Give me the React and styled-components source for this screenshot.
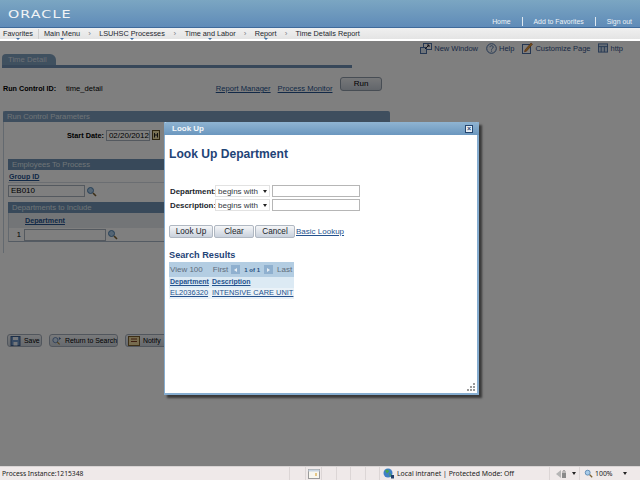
import React from "react"
import styled, { createGlobalStyle } from "styled-components"

const Global = createGlobalStyle`
	html, body { margin: 0; padding: 0; background: #fff; overflow: hidden; }
	* { box-sizing: border-box; }
`;

const Screen = styled.div`
	position: relative;
	width: 640px;
	height: 480px;
	display: flex;
	flex-direction: column;
	font-family: "Liberation Sans", Arial, sans-serif;
	font-size: 7.6px;
	color: #000;
	overflow: hidden;
`;

const Banner = styled.div`
	height: 28px;
	flex: none;
	display: flex;
	justify-content: space-between;
	background: linear-gradient(#7ba6c2, #5f8bb8);
	border-bottom: 1px solid #3f6a9a;
`;

const Logo = styled.div`
	margin: 8px 0 0 8px;
	font-family: "DejaVu Sans", sans-serif;
	font-size: 10.5px;
	line-height: 12px;
	letter-spacing: 0.8px;
	transform: scaleX(1.36);
	transform-origin: left;
	color: #f2f4f6;
	height: 12px;
`;

const BannerLinks = styled.div`
	display: flex;
	align-items: flex-end;
	padding: 0 8px 1px 0;
`;

const BannerLink = styled.span`
	color: #eef3f8;
	font-size: 6.9px;
	line-height: 9px;
	padding: 0 11px;
	border-left: ${p => (p.$first ? "none" : "1px solid #dfe8f0")};
	&:last-child { padding-right: 0; }
`;

const Nav = styled.div`
	height: 13px;
	flex: none;
	display: flex;
	align-items: center;
	padding-left: 3px;
	background: linear-gradient(#f0f0f0, #e4e4e4);
	border-bottom: 2px solid #fff;
	font-size: 7.3px;
	color: #23272e;
`;

const NavItem = styled.span`
	position: relative;
	white-space: nowrap;
	&::after {
		content: "";
		display: ${p => (p.$plain ? "none" : "block")};
		position: absolute;
		left: 50%;
		bottom: -2px;
		margin-left: -2px;
		border: 2px solid transparent;
		border-top: 2px solid #3b6ea8;
		border-bottom: none;
	}
`;

const NavSep = styled.span`
	width: ${p => p.$width}px;
	text-align: center;
	color: #7a7f86;
	font-size: 8px;
`;

const NavDivider = styled.span`
	width: 1px;
	height: 10px;
	margin: 0 5px 0 5px;
	background: #cfcfcf;
`;

const Page = styled.div`
	position: relative;
	flex: 1;
	background: #fff;
	min-height: 0;
	padding: 1px 0 0 3px;
`;

const Overlay = styled.div`
	position: absolute;
	inset: 0;
	background: rgba(0, 0, 0, 0.5);
`;

const ToolRow = styled.div`
	display: flex;
	justify-content: flex-end;
	align-items: center;
	gap: 8px;
	height: 12px;
	padding-right: 17px;
	font-size: 7.5px;
	color: #33528a;
`;

const ToolLink = styled.span`
	display: flex;
	align-items: center;
	gap: 2px;
`;

const TabStrip = styled.div`
	width: 350px;
	height: 14px;
	margin: 0 0 0 -1px;
	border-bottom: 3px solid #6f8fb3;
`;

const Tab = styled.div`
	width: 54px;
	height: 11px;
	padding: 0 0 0 6px;
	border-radius: 4px 6px 0 0;
	background: #7fa0bf;
	color: #d6dfe7;
	font-size: 7.7px;
	line-height: 11px;
`;

const RunRow = styled.div`
	display: flex;
	align-items: flex-end;
	width: 379px;
	height: 16px;
	margin-top: 9px;
`;

const BoldLabel = styled.b`
	width: 63px;
	font-size: 7.2px;
	flex: none;
`;

const Link = styled.span`
	color: #25528e;
	text-decoration: underline;
	white-space: nowrap;
	margin-left: ${p => p.$left || 0}px;
`;

const RunButton = styled.div`
	width: 42px;
	height: 14px;
	margin-left: auto;
	align-self: flex-start;
	border: 1px solid #8f9aa8;
	border-radius: 3px;
	background: linear-gradient(#eef0f3, #c5ccd6);
	text-align: center;
	line-height: 11px;
	font-size: 8px;
`;

const Panel = styled.div`
	width: 387px;
	margin-top: 18px;
	height: 142px;
	border-left: 1px solid #c6d2df;
`;

const PanelHead = styled.div`
	height: 11px;
	margin-left: -1px;
	padding-left: 4px;
	background: #7d9dbd;
	color: #dfe6ed;
	font-size: 7.7px;
	line-height: 11px;
	border-radius: 2px 2px 0 0;
`;

const DateRow = styled.div`
	display: flex;
	align-items: center;
	height: 12px;
	margin-top: 7px;
	padding-left: 63px;
	gap: 2px;
	b { font-size: 7.3px; }
`;

const Field = styled.div`
	width: ${p => p.$width}px;
	height: ${p => p.$height || 11}px;
	flex: none;
	padding-left: 2px;
	border: 1px solid #a9b3bf;
	background: #fff;
	font-size: 8px;
	line-height: 10px;
`;

const Section = styled.div`
	margin: ${p => p.$top}px 0 0 4px;
`;

const SectionHead = styled(PanelHead)`
	margin-left: 0;
	border-radius: 0;
	background: #7093b4;
`;

const LinkRow = styled.div`
	height: 13px;
	padding: 3px 0 0 1px;
	border-bottom: 1px solid #d7dde4;
	font-weight: bold;
	font-size: 7.1px;
	line-height: 9px;
`;

const InputRow = styled.div`
	display: flex;
	align-items: center;
	gap: 1px;
	margin-top: 2px;
`;

const GridHead = styled.div`
	height: 15px;
	padding: 3px 0 0 16px;
	background: #e7ebef;
	border-left: 1px solid #c6d2df;
	font-weight: bold;
	font-size: 7.2px;
	line-height: 9px;
`;

const GridRow = styled.div`
	height: 14px;
	display: flex;
	align-items: center;
	border-left: 1px solid #c6d2df;
	border-bottom: 1px solid #a9b7c6;
	gap: 1px;
`;

const RowNumber = styled.span`
	width: 14px;
	padding-right: 2px;
	text-align: right;
	flex: none;
`;

const SaveBar = styled.div`
	display: flex;
	gap: 7px;
	margin: 81px 0 0 4px;
`;

const SaveButton = styled.div`
	width: ${p => p.$width}px;
	height: 13px;
	flex: none;
	padding-left: 2px;
	display: flex;
	align-items: center;
	gap: 3px;
	border: 1px solid #a3adba;
	border-radius: 3px;
	background: linear-gradient(#f1f3f6, #ccd3dc);
	font-size: 6.9px;
	white-space: nowrap;
`;

const Dialog = styled.div`
	position: absolute;
	left: 164px;
	top: 81px;
	width: 315px;
	height: 273px;
	display: flex;
	flex-direction: column;
	background: #fff;
	border: 1px solid #86add0;
	border-width: 0 2px 2px 1px;
	box-shadow: 3px 3px 2px rgba(0, 0, 0, 0.55);
`;

const DialogBar = styled.div`
	height: 13px;
	flex: none;
	display: flex;
	justify-content: space-between;
	align-items: center;
	margin: 0 -2px 0 -1px;
	padding: 0 6px 0 8px;
	border-radius: 3px 3px 0 0;
	background: linear-gradient(#8fb4d2, #6b97bf);
	color: #f4f7fa;
	font-size: 8px;
	font-weight: bold;
`;

const CloseBox = styled.span`
	width: 8px;
	height: 8px;
	display: flex;
	align-items: center;
	justify-content: center;
	border: 1px solid #24456f;
	background: #e7eef5;
	color: #24456f;
	font-size: 7px;
	line-height: 6px;
	font-weight: bold;
`;

const DialogBody = styled.div`
	flex: 1;
	position: relative;
	padding: 12px 0 0 4px;
`;

const Title = styled.h1`
	margin: 0;
	height: 17px;
	font-size: 12.1px;
	line-height: 15px;
	font-weight: bold;
	color: #1f4477;
`;

const Criteria = styled.div`
	display: grid;
	grid-template-columns: 46px 57px 88px;
	grid-auto-rows: 14px;
	margin-top: 20px;
	align-items: center;
`;

const CritLabel = styled.b`
	font-size: 7.9px;
	margin-left: 1px;
	color: #22262c;
	white-space: nowrap;
`;

const Select = styled.div`
	width: 55px;
	height: 12px;
	padding-left: 2px;
	display: flex;
	justify-content: space-between;
	align-items: center;
	font-size: 8px;
	color: #33383e;
	border: 1px solid #e2e2e2;
	&::after {
		content: "";
		margin-right: 2px;
		border: 2.5px solid transparent;
		border-top: 3px solid #222;
		border-bottom: none;
	}
`;

const CritInput = styled.div`
	width: 88px;
	height: 12px;
	border: 1px solid #b6b6b6;
`;

const ActionRow = styled.div`
	display: flex;
	align-items: center;
	gap: 1px;
	margin-top: 13px;
`;

const ActionButton = styled.div`
	width: ${p => p.$width}px;
	height: 13px;
	border: 1px solid #b0b8c2;
	border-radius: 2px;
	background: linear-gradient(#f5f6f8, #c9d1dc);
	text-align: center;
	font-size: 8.2px;
	line-height: 11px;
	color: #22262c;
`;

const LookupLink = styled(Link)`
	font-size: 8px;
`;

const SearchTitle = styled.h2`
	margin: 11px 0 0;
	height: 13px;
	font-size: 9.2px;
	line-height: 12px;
	color: #1f4477;
`;

const Results = styled.div`
	width: 125px;
	font-size: 8px;
`;

const ResultsBar = styled.div`
	height: 15px;
	display: flex;
	align-items: center;
	padding-left: 1px;
	background: #b3cde2;
	color: #5f6c7a;
	white-space: nowrap;
`;

const FirstLabel = styled.span`
	margin-left: 10px;
`;

const PageArrow = styled.span`
	width: 9px;
	height: 9px;
	display: flex;
	align-items: center;
	justify-content: center;
	background: #8fb0cf;
	margin: ${p => p.$margin};
	&::after {
		content: "";
		border: 2px solid transparent;
		${p => (p.$back ? "border-right: 3px solid #e8eef4; border-left: none;" : "border-left: 3px solid #e8eef4; border-right: none;")}
	}
`;

const PageCount = styled.b`
	font-size: 6px;
	color: #284f80;
`;

const ResultRow = styled.div`
	display: grid;
	grid-template-columns: 42px 83px;
	height: 11px;
	padding-left: 1px;
	line-height: 10px;
	background: ${p => (p.$shade ? "#dceaf4" : "#eaf2f8")};
	font-weight: ${p => (p.$head ? "bold" : "normal")};
	font-size: ${p => (p.$head ? 7 : 7.45)}px;
`;

const Grip = styled.svg`
	position: absolute;
	right: 2px;
	bottom: 2px;
`;

const StatusBar = styled.div`
	height: 14px;
	flex: none;
	display: flex;
	align-items: center;
	background: #efe9e9;
	border-top: 1px solid #d8d4d4;
	font-family: "Noto Sans", "Liberation Sans", sans-serif;
	font-size: 6.9px;
	color: #1a1a1a;
`;

const StatusCell = styled.div`
	width: ${p => p.$width}px;
	height: 100%;
	flex: none;
	display: flex;
	align-items: center;
	gap: 2px;
	padding-left: ${p => p.$pad || 0}px;
	border-right: ${p => (p.$bare ? "none" : "1px solid #dcd6d6")};
	white-space: nowrap;
`;

const InstanceCell = styled(StatusCell)`
	font-size: 6.7px;
`;

const Caret = styled.span`
	margin-left: ${p => p.$left}px;
	border: 2.5px solid transparent;
	border-top: 3px solid #222;
	border-bottom: none;
`;

const Lens = ({ size = 11 }) => (
	<svg width={size} height={size} viewBox="0 0 11 11">
		<circle cx="4.5" cy="4.5" r="3" fill="#a8cbe8" stroke="#4d7fae" />
		<path d="M7 7l3 3" stroke="#7a5f2e" strokeWidth="1.6" />
	</svg>
);

const WindowIcon = () => (
	<svg width="12" height="11" viewBox="0 0 12 11">
		<rect x="3.5" y="0.5" width="8" height="6" fill="#fff" stroke="#4a6fa5" />
		<rect x="0.5" y="4.5" width="6" height="6" fill="#dfe8f3" stroke="#4a6fa5" />
		<path d="M5 6l4-4M7 2h2v2" stroke="#223" fill="none" />
	</svg>
);

const HelpIcon = () => (
	<svg width="11" height="11" viewBox="0 0 11 11">
		<circle cx="5.5" cy="5.5" r="4.8" fill="#f4f7fb" stroke="#4a6fa5" />
		<path d="M4 4.2c0-2 3.2-2 3.2 0 0 1.2-1.7 1.2-1.7 2.4M5.5 7.6v1" stroke="#4a6fa5" fill="none" />
	</svg>
);

const CustomizeIcon = () => (
	<svg width="11" height="12" viewBox="0 0 11 12">
		<rect x="0.5" y="2.5" width="8" height="9" fill="#fff" stroke="#4a6fa5" />
		<path d="M3 8l6-7 1.5 1.2-6 7-2 .6z" fill="#e0a030" stroke="#a5482a" strokeWidth="0.6" />
	</svg>
);

const LinkIcon = () => (
	<svg width="10" height="10" viewBox="0 0 11 10">
		<rect x="0.5" y="0.5" width="10" height="9" fill="#cfdcec" stroke="#4a6fa5" />
		<path d="M0 3.5h11M3.5 3.5v6M7 3.5v6" stroke="#4a6fa5" />
	</svg>
);

const CalendarIcon = () => (
	<svg width="8" height="10" viewBox="0 0 8 10">
		<rect x="0.5" y="0.5" width="7" height="9" fill="#f3e3a8" stroke="#5b4a20" />
		<path d="M2.5 3v4.5M5.5 3v4.5M2.5 5h3" stroke="#222" />
	</svg>
);

const SaveIcon = () => (
	<svg width="11" height="10" viewBox="0 0 11 10">
		<rect x="1" y="0.5" width="9" height="9" fill="#6f97c8" stroke="#3d5f8f" />
		<rect x="3" y="1" width="5" height="3" fill="#e8eef6" />
		<rect x="3.5" y="6" width="4" height="3.5" fill="#e8eef6" />
	</svg>
);

const ReturnIcon = () => (
	<svg width="12" height="11" viewBox="0 0 13 11">
		<circle cx="4.5" cy="5" r="3.4" fill="#cfe0f2" stroke="#4a6fa5" />
		<path d="M7 7.5l3 3" stroke="#a5802e" strokeWidth="1.4" />
		<path d="M9 1l3 2-3 2z" fill="#4a6fa5" />
	</svg>
);

const NotifyIcon = () => (
	<svg width="12" height="10" viewBox="0 0 12 10">
		<rect x="0.5" y="0.5" width="11" height="9" fill="#ecd79c" stroke="#7a5f2e" />
		<path d="M3 3h6M3 5.5h6" stroke="#7a3a20" />
	</svg>
);

const NoteIcon = () => (
	<svg width="12" height="10" viewBox="0 0 12 10">
		<rect x="0.5" y="0.5" width="11" height="9" fill="#f8f6ee" stroke="#9a9a9a" />
		<rect x="0.5" y="0.5" width="11" height="2" fill="#c9d5e2" />
		<path d="M8 4v3" stroke="#d49a20" />
	</svg>
);

const GlobeIcon = () => (
	<svg width="12" height="11" viewBox="0 0 12 11">
		<circle cx="5" cy="5" r="4.5" fill="#3f7fc4" />
		<path d="M2 2.5l3-1 1 2-2 2zM6 5l2 1-1 3z" fill="#4aa64a" />
		<path d="M8 7h3v3.5H8z" fill="#23406a" />
	</svg>
);

const ShieldIcon = () => (
	<svg width="14" height="10" viewBox="0 0 14 10">
		<path d="M1 5l5-4v8z" fill="#b5b5b5" />
		<rect x="7" y="4" width="4" height="5" fill="#8a8a8a" />
		<path d="M8 4V2.5a1 1 0 012 0V4" stroke="#8a8a8a" fill="none" />
	</svg>
);

const ResizeDots = () => (
	<Grip width="8" height="8" viewBox="0 0 8 8" fill="#9a9a9a">
		<rect x="6" y="0" width="2" height="2" />
		<rect x="3" y="3" width="2" height="2" />
		<rect x="6" y="3" width="2" height="2" />
		<rect x="0" y="6" width="2" height="2" />
		<rect x="3" y="6" width="2" height="2" />
		<rect x="6" y="6" width="2" height="2" />
	</Grip>
);

const App = () => (
	<Screen>
		<Global />
		<Banner>
			<Logo>ORACLE</Logo>
			<BannerLinks>
				<BannerLink $first>Home</BannerLink>
				<BannerLink>Add to Favorites</BannerLink>
				<BannerLink>Sign out</BannerLink>
			</BannerLinks>
		</Banner>
		<Nav>
			<NavItem>Favorites</NavItem>
			<NavDivider />
			<NavItem>Main Menu</NavItem>
			<NavSep $width={19}>›</NavSep>
			<NavItem>LSUHSC Processes</NavItem>
			<NavSep $width={20}>›</NavSep>
			<NavItem>Time and Labor</NavItem>
			<NavSep $width={19}>›</NavSep>
			<NavItem>Report</NavItem>
			<NavSep $width={19}>›</NavSep>
			<NavItem $plain>Time Details Report</NavItem>
		</Nav>
		<Page>
			<ToolRow>
				<ToolLink><WindowIcon />New Window</ToolLink>
				<ToolLink><HelpIcon />Help</ToolLink>
				<ToolLink><CustomizeIcon />Customize Page</ToolLink>
				<ToolLink><LinkIcon />http</ToolLink>
			</ToolRow>
			<TabStrip><Tab>Time Detail</Tab></TabStrip>
			<RunRow>
				<BoldLabel>Run Control ID:</BoldLabel>
				<span>time_detail</span>
				<Link $left={113}>Report Manager</Link>
				<Link $left={7}>Process Monitor</Link>
				<RunButton>Run</RunButton>
			</RunRow>
			<Panel>
				<PanelHead>Run Control Parameters</PanelHead>
				<DateRow>
					<b>Start Date:</b>
					<Field $width={44}>02/20/2012</Field>
					<CalendarIcon />
				</DateRow>
				<Section $top={18}>
					<SectionHead>Employees To Process</SectionHead>
					<LinkRow><Link>Group ID</Link></LinkRow>
					<InputRow>
						<Field $width={77} $height={12}>EB010</Field>
						<Lens />
					</InputRow>
				</Section>
				<Section $top={5}>
					<SectionHead>Departments to Include</SectionHead>
					<GridHead><Link>Department</Link></GridHead>
					<GridRow>
						<RowNumber>1</RowNumber>
						<Field $width={82} $height={12} />
						<Lens />
					</GridRow>
				</Section>
			</Panel>
			<SaveBar>
				<SaveButton $width={35}><SaveIcon />Save</SaveButton>
				<SaveButton $width={69}><ReturnIcon />Return to Search</SaveButton>
				<SaveButton $width={44}><NotifyIcon />Notify</SaveButton>
			</SaveBar>
			<Overlay />
			<Dialog>
				<DialogBar>
					Look Up
					<CloseBox>×</CloseBox>
				</DialogBar>
				<DialogBody>
					<Title>Look Up Department</Title>
					<Criteria>
						<CritLabel>Department:</CritLabel>
						<Select>begins with</Select>
						<CritInput />
						<CritLabel>Description:</CritLabel>
						<Select>begins with</Select>
						<CritInput />
					</Criteria>
					<ActionRow>
						<ActionButton $width={44}>Look Up</ActionButton>
						<ActionButton $width={40}>Clear</ActionButton>
						<ActionButton $width={40}>Cancel</ActionButton>
						<LookupLink>Basic Lookup</LookupLink>
					</ActionRow>
					<SearchTitle>Search Results</SearchTitle>
					<Results>
						<ResultsBar>
							View 100
							<FirstLabel>First</FirstLabel>
							<PageArrow $back $margin="0 4px 0 3px" />
							<PageCount>1 of 1</PageCount>
							<PageArrow $margin="0 4px" />
							Last
						</ResultsBar>
						<ResultRow $head $shade>
							<Link>Department</Link>
							<Link>Description</Link>
						</ResultRow>
						<ResultRow>
							<Link>EL2036320</Link>
							<Link>INTENSIVE CARE UNIT</Link>
						</ResultRow>
					</Results>
					<ResizeDots />
				</DialogBody>
			</Dialog>
		</Page>
		<StatusBar>
			<InstanceCell $width={290} $pad={2}>Process Instance:1215348</InstanceCell>
			<StatusCell $width={16} />
			<StatusCell $width={16} $pad={2}><NoteIcon /></StatusCell>
			<StatusCell $width={15} />
			<StatusCell $width={14} />
			<StatusCell $width={15} />
			<StatusCell $width={14} />
			<StatusCell $width={170} $pad={3}><GlobeIcon />Local intranet | Protected Mode: Off</StatusCell>
			<StatusCell $width={30} $pad={5}><ShieldIcon /><Caret $left={1} /></StatusCell>
			<StatusCell $width={60} $pad={4} $bare><Lens size={9} />100%<Caret $left={8} /></StatusCell>
		</StatusBar>
	</Screen>
);

export default App;
